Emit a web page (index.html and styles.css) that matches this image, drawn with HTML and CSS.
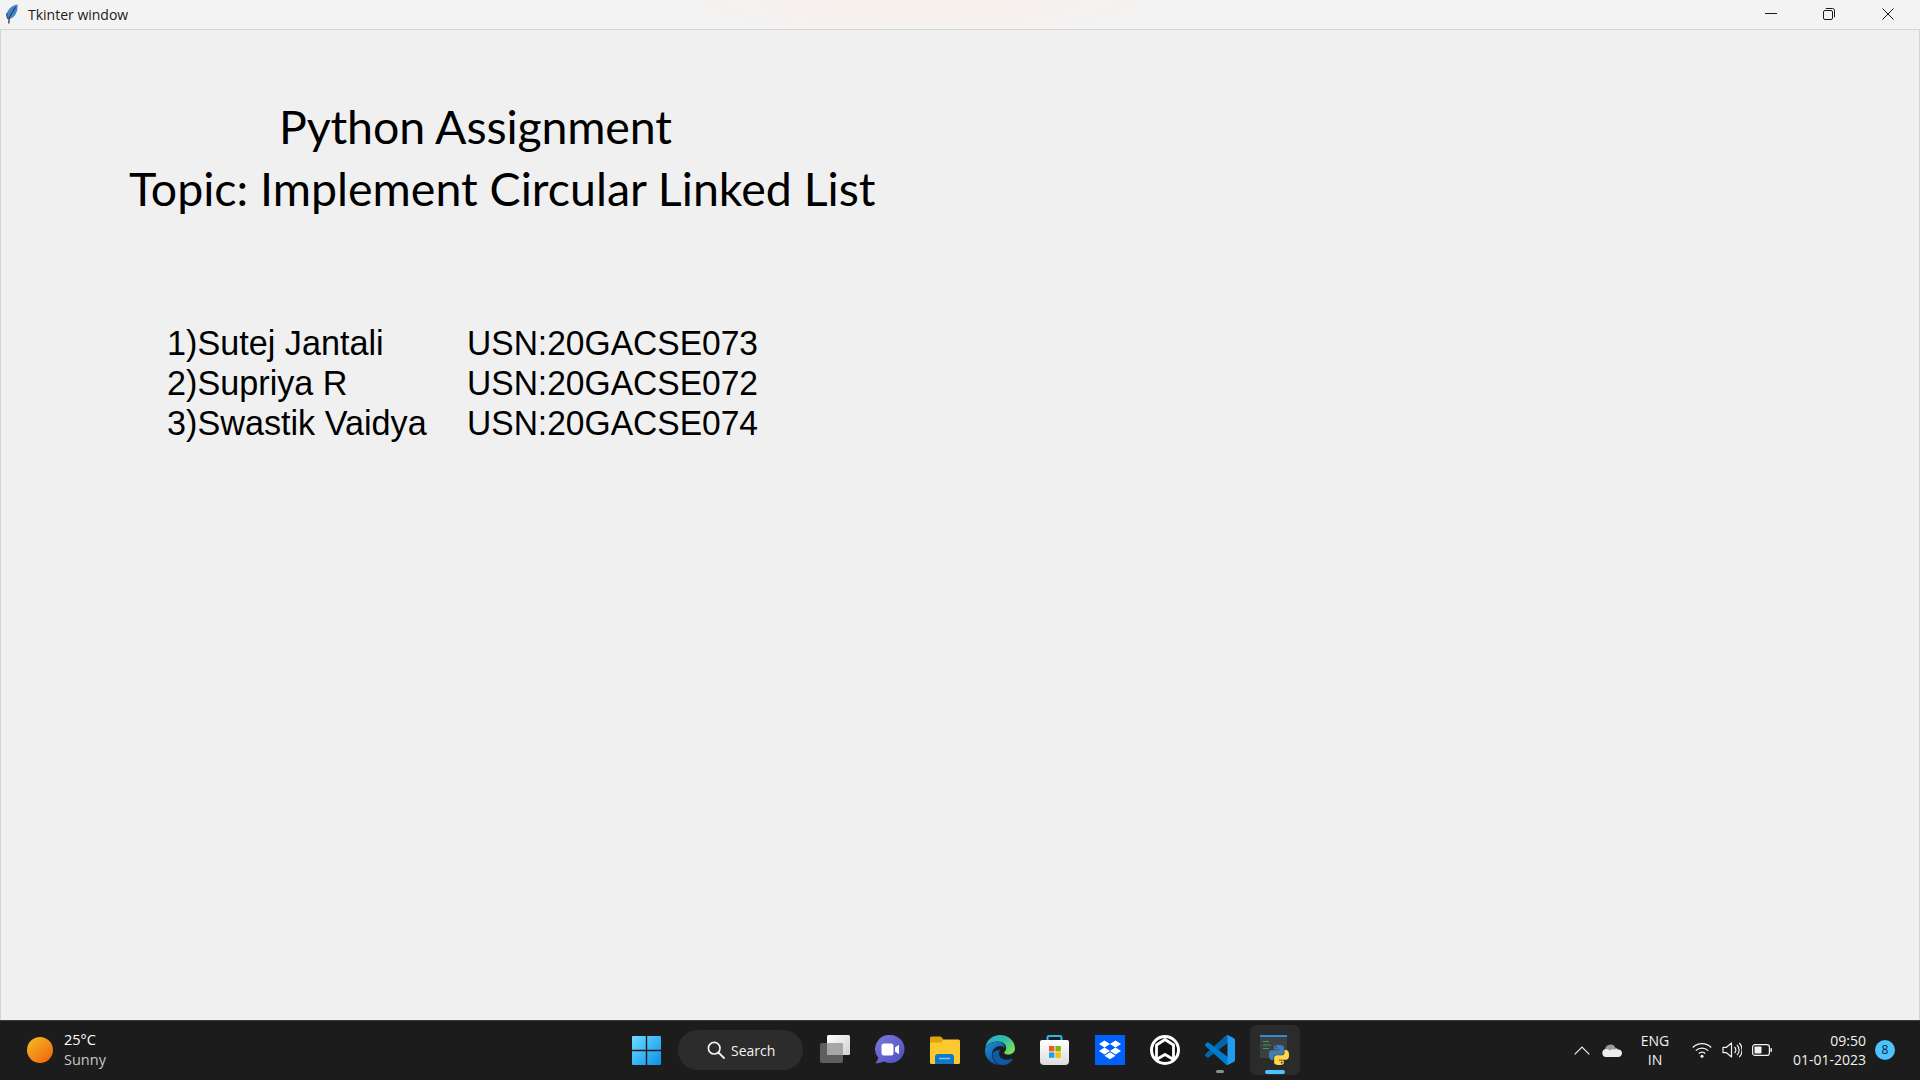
FILE: index.html
```html
<!DOCTYPE html>
<html lang="en">
<head>
<meta charset="utf-8">
<title>Tkinter window</title>
<link rel="stylesheet" href="styles.css">
</head>
<body>
<div class="screen">
  <header class="titlebar">
    <svg class="feather" viewBox="0 0 12 20"><path d="M11.500.5C7.500 1 2.500 4 1 9 .5 11 .8 13 2 15 6 15 9.500 12 10.800 7.500 11.500 5 11.800 2.500 11.500.5z" fill="#4583cc"/><path d="M9.500 3 3 14M1 9C.5 11 .8 13 2 15" stroke="#1c2f4d" stroke-width="1" fill="none"/><path d="M3.200 13.500 2.800 19.500" stroke="#333" stroke-width="1.300" fill="none"/></svg>
    <span class="window-title">Tkinter window</span>
    <div class="controls">
      <svg class="ctl" viewBox="0 0 12 12"><path d="M0 5.500h12" stroke="#1a1a1a" fill="none"/></svg>
      <svg class="ctl ctl-restore" viewBox="0 0 12 12"><rect x=".5" y="2.500" width="9" height="9" rx="1.500" stroke="#1a1a1a" fill="none"/><path d="M2.800.5h6.700a2 2 0 0 1 2 2v6.700" stroke="#1a1a1a" fill="none"/></svg>
      <svg class="ctl" viewBox="0 0 12 12"><path d="M.5.500l11 11M11.500.5l-11 11" stroke="#1a1a1a" fill="none"/></svg>
    </div>
  </header>

  <main class="canvas">
    <div class="heading heading-first">Python Assignment</div>
    <div class="heading heading-second">Topic: Implement Circular Linked List</div>
    <div class="students">
      <span class="name">1)Sutej Jantali</span><span class="usn">USN:20GACSE073</span>
      <span class="name">2)Supriya R</span><span class="usn">USN:20GACSE072</span>
      <span class="name">3)Swastik Vaidya</span><span class="usn">USN:20GACSE074</span>
    </div>
  </main>

  <footer class="taskbar">
    <div class="weather">
      <svg class="sun" viewBox="0 0 26 26"><defs><linearGradient id="sung" x1="0.150" y1="0.100" x2="0.850" y2="0.900"><stop offset="0" stop-color="#f5b324"/><stop offset="1" stop-color="#f0690f"/></linearGradient></defs><circle cx="13" cy="13" r="13" fill="url(#sung)"/></svg>
      <div class="weather-text"><span class="temp">25°C</span><span class="cond">Sunny</span></div>
    </div>

    <div class="apps">
      <div class="slot">
        <svg class="ico-win" viewBox="0 0 29 29"><defs><linearGradient id="wing" x1="0" y1="0" x2="1" y2="1"><stop offset="0" stop-color="#6fdcff"/><stop offset="1" stop-color="#0a90e8"/></linearGradient></defs><path d="M1 0h12.800v13.800H0V1a1 1 0 0 1 1-1zM15.200 0H28a1 1 0 0 1 1 1v12.800H15.200zM0 15.200h13.800V29H1a1 1 0 0 1-1-1zM15.200 15.200H29V28a1 1 0 0 1-1 1H15.200z" fill="url(#wing)"/></svg>
      </div>
      <div class="search">
        <svg class="glass" viewBox="0 0 18 18"><circle cx="7.200" cy="7.200" r="5.800" fill="none" stroke="#f2f2f2" stroke-width="1.700"/><path d="M11.500 11.500 17 17" stroke="#f2f2f2" stroke-width="1.800" stroke-linecap="round"/></svg>
        <span>Search</span>
      </div>
      <div class="slot slot-after-search">
        <svg class="ico" viewBox="0 0 30 30"><defs><linearGradient id="tv1" x1="0" y1="0" x2="1" y2="1"><stop offset="0" stop-color="#ffffff"/><stop offset="1" stop-color="#d0d0d0"/></linearGradient></defs><rect x="0" y="8" width="23" height="20" rx="2" fill="#5e5e5e"/><rect x="7" y="0" width="23" height="20" rx="1.500" fill="url(#tv1)"/><rect x="7" y="8" width="16" height="12" rx="1" fill="#a6a6a6"/></svg>
      </div>
      <div class="slot">
        <svg class="ico" viewBox="0 0 30 30"><defs><linearGradient id="chatg" x1="0" y1="0" x2="1" y2="1"><stop offset="0" stop-color="#7b79d8"/><stop offset="1" stop-color="#4d4ec4"/></linearGradient></defs><path d="M15.500 0a14 14 0 1 1-6.500 26.400C6.500 27.500 3.500 28 1 28.300c-.5 0-.6-.4-.3-.7 1.400-1.400 2.200-3 2.500-5A14 14 0 0 1 15.500 0z" fill="url(#chatg)"/><rect x="6.500" y="8.500" width="12" height="12" rx="2.500" fill="#fff"/><path d="M20 12.500l4-2.800v9.600l-4-2.800z" fill="#fff"/></svg>
      </div>
      <div class="slot">
        <svg class="ico" viewBox="0 0 30 30"><path d="M0 3a1.500 1.500 0 0 1 1.500-1.500h8c1 0 1.500.4 2.200 1L14 5v3H0z" fill="#e0a30b"/><path d="M0 7.500 11 7.500 14 4.500H28.500A1.500 1.500 0 0 1 30 6v21.500a1.500 1.500 0 0 1-1.500 1.500H1.500A1.500 1.500 0 0 1 0 27.500z" fill="#fdc92f"/><path d="M5 29v-7a3 3 0 0 1 3-3h13a3 3 0 0 1 3 3v7z" fill="#0f78c8"/><path d="M9 23.500h11" stroke="#7fc6f2" stroke-width="1.500"/></svg>
      </div>
      <div class="slot">
        <svg class="ico" viewBox="0 0 30 30"><defs><linearGradient id="edge1" x1="0" y1="0" x2="1" y2="0.700"><stop offset="0" stop-color="#23a3d8"/><stop offset="0.600" stop-color="#35c0a0"/><stop offset="1" stop-color="#7ce05a"/></linearGradient><linearGradient id="edge2" x1="0" y1="0" x2="0.800" y2="1"><stop offset="0" stop-color="#1e8fd8"/><stop offset="1" stop-color="#0b4a94"/></linearGradient></defs><path d="M15 0c8.500 0 15 6 15 13.500 0 3.500-3 6-6.500 6-2.500 0-4.300-.5-4.300-2 0-1 2-1.500 2-4.500 0-3.500-3-6.500-8-6.500C7 6.500 2 9 .2 13 1.500 5 7.500 0 15 0z" fill="url(#edge1)"/><path d="M13.500 6.500c-6 0-13.500 3-13.500 9C0 23.500 6.500 30 15 30c-4-1-8-5.500-8-10.500 0-5 4-8.500 8-8.500 2.200 0 4 .8 5 2-.5-4-3-6.500-6.500-6.500z" fill="url(#edge2)"/><path d="M7.500 19c0 6 5 11 10 11 4 0 8-2 10-5.500.3-.6-.2-1-.8-.7-1.500.7-3 1-4.700 1-5 0-8-3-8-6.300 0-1.300.4-2.300 1.100-3.200C10.500 15 7.500 17 7.500 19z" fill="#0d5aa6"/></svg>
      </div>
      <div class="slot">
        <svg class="ico" viewBox="0 0 30 30"><defs><linearGradient id="bag" x1="0" y1="0" x2="0" y2="1"><stop offset="0" stop-color="#ffffff"/><stop offset="1" stop-color="#dcdcdc"/></linearGradient></defs><path d="M7.500 5V2.500A1.500 1.500 0 0 1 9 1h11a1.500 1.500 0 0 1 1.500 1.500V5" fill="none" stroke="#2bb8ea" stroke-width="2"/><path d="M2 5h25a2 2 0 0 1 2 2v19a4 4 0 0 1-4 4H4a4 4 0 0 1-4-4V7a2 2 0 0 1 2-2z" fill="url(#bag)"/><rect x="9" y="11" width="5.400" height="5.400" fill="#ef5a29"/><rect x="15.400" y="11" width="5.400" height="5.400" fill="#7eb900"/><rect x="9" y="17.400" width="5.400" height="5.400" fill="#11a5ef"/><rect x="15.400" y="17.400" width="5.400" height="5.400" fill="#ffb900"/></svg>
      </div>
      <div class="slot">
        <svg class="ico" viewBox="0 0 30 30"><rect width="30" height="30" fill="#0061fe"/><path d="M9.500 5.500 15 9l-5.500 3.500L4 9zM20.500 5.500 26 9l-5.500 3.500L15 9zM4 16l5.500-3.500L15 16l-5.500 3.500zM15 16l5.500-3.500L26 16l-5.500 3.500zM9.500 20.700 15 17.200l5.500 3.500L15 24.200z" fill="#fff"/></svg>
      </div>
      <div class="slot">
        <svg class="ico" viewBox="0 0 30 30"><circle cx="15" cy="15" r="13.500" fill="#111" stroke="#fff" stroke-width="3"/><path d="M15 4.500 23.500 10v14.500L15 19.500 6.500 24.500V10z" fill="none" stroke="#fff" stroke-width="2.800" stroke-linejoin="round"/><path d="M15 9 19.500 12v5L15 15l-4.500 2v-5z" fill="#111"/></svg>
      </div>
      <div class="slot slot-running">
        <svg class="ico" viewBox="0 0 100 100"><path d="M96.460 10.800 75.860.9a6.230 6.230 0 0 0-7.100 1.200L1.300 63.700a4.160 4.160 0 0 0 .01 6.160l5.500 5a4.160 4.160 0 0 0 5.300.24L93.400 13.400c2.700-2 6.600-.1 6.600 3.300v-.2a6.250 6.250 0 0 0-3.540-5.700z" fill="#0065a9"/><path d="M96.460 89.200 75.860 99.100a6.230 6.230 0 0 1-7.100-1.200L1.300 36.300a4.160 4.160 0 0 1 .01-6.160l5.500-5a4.160 4.160 0 0 1 5.300-.24L93.400 86.600c2.700 2 6.600.1 6.600-3.300v.2a6.250 6.250 0 0 1-3.540 5.700z" fill="#007acc"/><path d="M75.860 99.130a6.240 6.240 0 0 1-7.100-1.200c2.300 2.300 6.240.67 6.240-2.600V4.670c0-3.270-3.940-4.900-6.250-2.600a6.240 6.240 0 0 1 7.100-1.200l20.600 9.900A6.250 6.250 0 0 1 100 16.400v67.200a6.250 6.250 0 0 1-3.540 5.630z" fill="#1f9cf0"/></svg>
        <i class="dot"></i>
      </div>
      <div class="slot slot-active">
        <svg class="ico" viewBox="0 0 30 30"><rect x="0" y="0" width="27" height="23" fill="#3c4045"/><rect x="0" y="0" width="27" height="2" fill="#2f8fc8"/><path d="M3 6.500h6M3 10h8M3 13.500h6" stroke="#3f9c4a" stroke-width="1.200"/><g transform="translate(9 10) scale(.833)"><path fill-rule="evenodd" fill="#3f7fb5" d="M14.250.18l.9.2.73.26.59.3.45.32.34.34.25.34.16.33.1.3.04.26.02.2-.01.13V8.500l-.05.63-.13.55-.21.46-.26.38-.3.31-.33.25-.35.19-.35.14-.33.1-.3.07-.26.04-.21.02H8.770l-.69.05-.59.14-.5.22-.41.27-.33.32-.27.35-.2.36-.15.37-.1.35-.07.32-.04.27-.02.21v3.060H3.170l-.21-.03-.28-.07-.32-.12-.35-.18-.36-.26-.36-.36-.35-.46-.32-.59-.28-.73-.21-.88-.14-1.050-.05-1.230.06-1.220.16-1.040.24-.87.32-.71.36-.57.4-.44.42-.33.42-.24.4-.16.36-.1.32-.05.24-.01h.16l.06.01h8.160v-.83H6.180l-.01-2.750-.02-.37.05-.34.11-.31.17-.28.25-.26.31-.23.38-.2.44-.18.51-.15.58-.12.64-.1.71-.06.77-.04.84-.02 1.270.05zm-6.300 1.980l-.23.33-.08.41.08.41.23.34.33.22.41.09.41-.09.33-.22.23-.34.08-.41-.08-.41-.23-.33-.33-.22-.41-.09-.41.09z"/><path fill-rule="evenodd" fill="#ffd54a" d="M21.040 6.110l.28.06.32.12.35.18.36.27.36.35.35.47.32.59.28.73.21.88.14 1.040.05 1.230-.06 1.230-.16 1.040-.24.86-.32.71-.36.57-.4.45-.42.33-.42.24-.4.16-.36.09-.32.05-.24.02-.16-.01h-8.220v.82h5.840l.01 2.760.02.36-.05.34-.11.31-.17.29-.25.25-.31.24-.38.2-.44.17-.51.15-.58.13-.64.09-.71.07-.77.04-.84.01-1.270-.04-1.070-.14-.9-.2-.73-.25-.59-.3-.45-.33-.34-.34-.25-.34-.16-.33-.1-.3-.04-.25-.02-.2.01-.13v-5.340l.05-.64.13-.54.21-.46.26-.38.3-.32.33-.24.35-.2.35-.14.33-.1.3-.06.26-.04.21-.02.13-.01h5.840l.69-.05.59-.14.5-.21.41-.28.33-.32.27-.35.2-.36.15-.36.1-.35.07-.32.04-.28.02-.21V6.070h2.090l.14.01zm-6.470 14.250l-.23.33-.08.41.08.41.23.33.33.23.41.08.41-.08.33-.23.23-.33.08-.41-.08-.41-.23-.33-.33-.23-.41-.08-.41.08z"/></g></svg>
        <i class="bar"></i>
      </div>
    </div>

    <div class="tray">
      <svg class="caret" viewBox="0 0 16 9"><path d="M.7 8.300 8 1l7.300 7.300" fill="none" stroke="#f0f0f0" stroke-width="1.200"/></svg>
      <svg class="cloud" viewBox="0 0 20 13"><path d="M3 5.500a5.500 5.500 0 0 1 10.400-1.800 4 4 0 0 1 2.800 1.600L9 9 3 7z" fill="#9a9a9a"/><path d="M4 13a4 4 0 0 1-.5-7.900 4.800 4.800 0 0 1 4.300 1.300 4.500 4.500 0 0 1 4.400-.8 4 4 0 0 1 3.800-.1A3.800 3.800 0 0 1 20 9c0 2.500-1.700 4-3.800 4z" fill="#ededed"/></svg>
      <div class="lang"><span>ENG</span><span>IN</span></div>
      <svg class="tray-ico tray-wifi" viewBox="0 0 20 16"><path d="M.8 5.500a13 13 0 0 1 18.400 0M3.800 8.600a8.800 8.800 0 0 1 12.400 0M6.800 11.500a4.500 4.500 0 0 1 6.400 0" fill="none" stroke="#f2f2f2" stroke-width="1.300"/><circle cx="10" cy="14.300" r="1.500" fill="#f2f2f2"/></svg>
      <svg class="tray-ico" viewBox="0 0 20 16"><path d="M1 5.300h3.500L9.500 1v14L4.500 10.700H1z" fill="none" stroke="#f2f2f2" stroke-width="1.200" stroke-linejoin="round"/><path d="M12.500 5a4 4 0 0 1 0 6M15 2.800a7.500 7.500 0 0 1 0 10.400M17.300.8a10.500 10.500 0 0 1 0 14.400" fill="none" stroke="#f2f2f2" stroke-width="1.200"/></svg>
      <svg class="tray-ico" viewBox="0 0 20 12"><rect x=".6" y=".6" width="16.800" height="10.800" rx="2.500" fill="none" stroke="#f2f2f2" stroke-width="1.200"/><rect x="2.500" y="2.500" width="7" height="7" rx=".8" fill="#f2f2f2"/><path d="M18.500 4H19a1 1 0 0 1 1 1v2a1 1 0 0 1-1 1h-.5z" fill="#f2f2f2"/></svg>
      <div class="clock"><span>09:50</span><span>01-01-2023</span></div>
      <div class="badge">8</div>
    </div>
  </footer>
</div>
</body>
</html>
```
FILE: styles.css
```css
* { box-sizing: border-box; }
html, body { margin: 0; height: 100%; }
body { overflow: hidden; background: #f0f0f0; }

.screen {
  width: 1920px;
  height: 1080px;
  display: flex;
  flex-direction: column;
  font-family: "Open Sans", "Noto Sans", sans-serif;
}

/* Title bar */
.titlebar {
  height: 30px;
  flex: none;
  display: flex;
  align-items: center;
  padding-left: 6px;
  border-bottom: 1px solid #d4d4d4;
  background: radial-gradient(ellipse 260px 40px at 920px 0, #f9efea 0%, #f3f3f3 100%);
}
.feather { width: 12px; height: 20px; flex: none; margin-top: -2px; }
.window-title { margin-left: 10px; font-size: 14px; color: #1a1a1a; margin-top: -1px; }
.controls { margin-left: auto; display: flex; gap: 46px; padding-right: 26px; margin-top: -1px; }
.ctl { width: 12px; height: 12px; display: block; }
.ctl-restore { margin-right: 1px; }

/* Window content */
.canvas {
  flex: 1;
  background: #f0f0f0;
  border-left: 1px solid #d4d4d4;
  border-right: 1px solid #d4d4d4;
  padding-top: 65px;
  font-family: "Lato", "Open Sans", sans-serif;
  color: #000;
}
.heading { font-size: 46.5px; line-height: 62px; white-space: nowrap; }
.heading-first { padding-left: 278px; letter-spacing: -0.15px; }
.heading-second { padding-left: 128px; }
.students {
  margin-top: 104px;
  margin-left: 166px;
  display: grid;
  grid-template-columns: 299.500px auto;
  justify-content: start;
  font-family: "Liberation Sans", Arial, sans-serif;
  font-size: 35px;
  line-height: 40px;
  color: #000;
}
.name { display: block; white-space: nowrap; transform: scaleX(.977); transform-origin: left center; }
.usn { display: block; white-space: nowrap; transform: scaleX(.959); transform-origin: left center; }

/* Taskbar */
.taskbar {
  height: 60px;
  flex: none;
  display: flex;
  align-items: center;
  padding-bottom: 1px;
  background: #1c1c1c;
  border-top: 1px solid #3a3a3a;
  color: #fff;
}
.weather {
  width: 622px;
  flex: none;
  display: flex;
  align-items: center;
  padding-left: 27px;
}
.sun { width: 26px; height: 26px; }
.weather-text { margin-left: 11px; display: flex; flex-direction: column; font-size: 14.500px; line-height: 20px; }
.temp { color: #fff; }
.cond { color: #c8c8c8; }

.apps { display: flex; gap: 5px; align-items: center; }
.slot {
  width: 50px;
  height: 50px;
  position: relative;
  display: flex;
  align-items: center;
  justify-content: center;
}
.ico { width: 30px; height: 30px; display: block; }
.ico-win { width: 29px; height: 29px; display: block; margin-right: 1px; }
.search {
  width: 125px;
  height: 40px;
  margin-left: 1px;
  display: flex;
  align-items: center;
  gap: 6px;
  padding-left: 29px;
  border-radius: 20px;
  background: #2c2c2c;
  font-size: 14px;
  color: #f2f2f2;
}
.glass { width: 18px; height: 18px; flex: none; }
.slot-after-search { margin-left: 2px; }
.slot-active { background: #2b2b2b; border-radius: 6px; }
.dot {
  position: absolute;
  left: 21px;
  bottom: 2px;
  width: 8px;
  height: 3px;
  border-radius: 2px;
  background: #8e8e8e;
}
.bar {
  position: absolute;
  left: 15px;
  bottom: 1px;
  width: 20px;
  height: 4px;
  border-radius: 2px;
  background: #4cc2ff;
}

.tray { margin-left: auto; padding-right: 25px; display: flex; align-items: center; }
.caret { width: 16px; height: 9px; margin-right: 12px; }
.cloud { width: 20px; height: 13px; }
.lang {
  width: 40px;
  margin-left: 13px;
  padding-bottom: 1px;
  display: flex;
  flex-direction: column;
  align-items: center;
  font-size: 14px;
  line-height: 19px;
  color: #f2f2f2;
}
.tray-ico { width: 20px; height: 16px; margin-left: 10px; }
.tray-wifi { margin-left: 17px; }
.clock {
  width: 73px;
  margin-left: 21px;
  padding-bottom: 1px;
  display: flex;
  flex-direction: column;
  align-items: flex-end;
  font-size: 14px;
  line-height: 19px;
  color: #f2f2f2;
  white-space: nowrap;
}
.badge {
  width: 20px;
  height: 20px;
  margin-left: 9px;
  border-radius: 50%;
  background: #4cc2ff;
  color: #10242f;
  font-size: 12px;
  line-height: 20px;
  text-align: center;
}
```
